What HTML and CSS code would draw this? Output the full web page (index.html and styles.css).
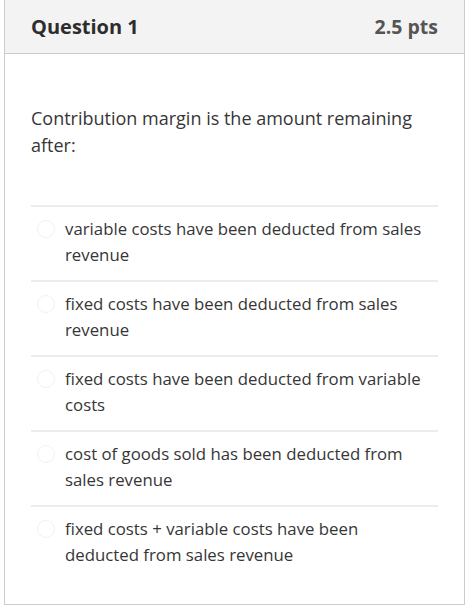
FILE: index.html
```html
<!DOCTYPE html>
<html>
<head>
<meta charset="utf-8">
<link rel="stylesheet" href="styles.css">
</head>
<body>
<div class="question">
  <div class="q-header">
    <span class="q-title">Question 1</span>
    <span class="q-pts">2.5 pts</span>
  </div>
  <div class="q-body">
    <p class="q-text">Contribution margin is the amount remaining after:</p>
    <ul class="answers">
      <li class="answer"><span class="radio"></span><span class="label">variable costs have been deducted from sales revenue</span></li>
      <li class="answer"><span class="radio"></span><span class="label">fixed costs have been deducted from sales revenue</span></li>
      <li class="answer"><span class="radio"></span><span class="label">fixed costs have been deducted from variable costs</span></li>
      <li class="answer"><span class="radio"></span><span class="label">cost of goods sold has been deducted from sales revenue</span></li>
      <li class="answer"><span class="radio"></span><span class="label">fixed costs + variable costs have been deducted from sales revenue</span></li>
    </ul>
  </div>
</div>
</body>
</html>
```

FILE: styles.css
```css
html, body {
  margin: 0;
  padding: 0;
  background: #ffffff;
}
body {
  font-family: "Open Sans", "Liberation Sans", sans-serif;
  color: #333333;
}
.question {
  margin-left: 4px;
  width: 459px;
  border: 1px solid #c7cdd1;
  border-top: none;
}
.q-header {
  height: 54px;
  background: #f3f3f3;
  border-bottom: 1px solid #c7cdd1;
  display: flex;
  align-items: center;
  justify-content: space-between;
  padding: 0 26px;
  box-sizing: border-box;
}
.q-title {
  font-size: 20px;
  font-weight: 700;
  color: #2d2d2d;
}
.q-pts {
  font-size: 19.5px;
  font-weight: 700;
  color: #555555;
}
.q-body {
  padding: 51px 26px 24px 26px;
}
.q-text {
  margin: 0 0 46px 0;
  font-size: 18px;
  line-height: 27px;
  color: #363636;
}
.answers {
  list-style: none;
  margin: 0;
  padding: 0;
}
.answer {
  display: flex;
  align-items: flex-start;
  border-top: 2px solid #ececec;
  padding: 9px 0 12px 0;
  font-size: 16.8px;
  line-height: 26px;
  color: #363636;
}
.radio {
  flex: none;
  width: 16px;
  height: 16px;
  border: 1px solid #f2f2f2;
  border-radius: 50%;
  margin: 4px 10px 0 6px;
}
.label {
  flex: 1;
  padding-right: 10px;
}
```
